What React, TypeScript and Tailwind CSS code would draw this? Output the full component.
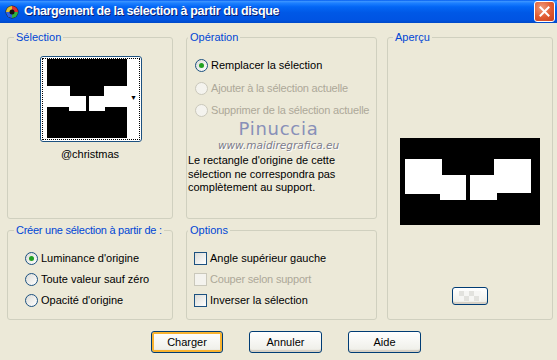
import React from 'react'

const font = { fontFamily: '"Liberation Sans", Arial, sans-serif' }

function Radio({ checked = false, disabled = false }: { checked?: boolean; disabled?: boolean }) {
  return (
    <span
      className={`flex h-[13px] w-[13px] shrink-0 items-center justify-center rounded-full border ${
        disabled
          ? 'border-[#cac8bb] bg-[#f4f3ee]'
          : 'border-[#1c5180] bg-[linear-gradient(135deg,#dcdcd7,#ffffff)]'
      }`}
    >
      {checked && <span className="h-[5px] w-[5px] rounded-full bg-[#21a121]" />}
    </span>
  )
}

function Check({ disabled = false }: { disabled?: boolean }) {
  return (
    <span
      className={`h-[13px] w-[13px] shrink-0 border ${
        disabled
          ? 'border-[#cac8bb] bg-[#f4f3ee]'
          : 'border-[#1c5180] bg-[linear-gradient(135deg,#dcdcd7,#ffffff)]'
      }`}
    />
  )
}

function Row({ control, label, disabled = false }: { control: React.ReactNode; label: string; disabled?: boolean }) {
  return (
    <div className="flex h-[13px] items-center gap-[3px] whitespace-nowrap">
      {control}
      <span className={disabled ? 'tracking-[-0.2px] text-[#aca899]' : 'text-black'}>{label}</span>
    </div>
  )
}

function Group({
  title,
  offset,
  className = '',
  children,
}: {
  title: string
  offset: string
  className?: string
  children: React.ReactNode
}) {
  return (
    <fieldset className={`min-w-0 rounded-[3px] border border-[#d0d0bf] ${className}`}>
      <legend className={`${offset} whitespace-nowrap px-[2px] leading-[13px] text-[#0046d5]`}>{title}</legend>
      {children}
    </fieldset>
  )
}

function XpButton({
  label,
  primary = false,
  className = '',
  children,
}: {
  label: string
  primary?: boolean
  className?: string
  children?: React.ReactNode
}) {
  return (
    <div
      className={`flex items-center justify-center rounded-[3px] border border-[#003c74] bg-[linear-gradient(180deg,#ffffff,#f0f0ea_85%,#d6d0c5)] text-black ${
        primary ? 'shadow-[inset_0_0_0_2px_#f8b330]' : 'shadow-[inset_0_-2px_0_#d6d0c5]'
      } ${className}`}
    >
      {label}
      {children}
    </div>
  )
}

function Shape({ w, h, scale }: { w: number; h: number; scale: 'thumb' | 'preview' }) {
  return scale === 'thumb' ? (
    <svg width={w} height={h} viewBox="0 0 80 79">
      <rect width="80" height="79" fill="#000" />
      <rect x="0" y="27" width="23" height="21" fill="#fff" />
      <rect x="22" y="37" width="17" height="15" fill="#fff" />
      <rect x="42" y="37" width="16" height="15" fill="#fff" />
      <rect x="57" y="27" width="23" height="21" fill="#fff" />
    </svg>
  ) : (
    <svg width={w} height={h} viewBox="0 0 140 87">
      <rect width="140" height="87" fill="#000" />
      <rect x="5" y="21" width="37" height="35" fill="#fff" />
      <rect x="40" y="37" width="26" height="25" fill="#fff" />
      <rect x="70" y="37" width="27" height="25" fill="#fff" />
      <rect x="94" y="21" width="37" height="34" fill="#fff" />
    </svg>
  )
}

export default function App() {
  return (
    <div className="h-[360px] w-[557px] overflow-hidden bg-[#ece9d8] text-[11px]" style={font}>
      {/* title bar */}
      <div className="flex h-[23px] items-center bg-[linear-gradient(180deg,#0058ee_0%,#3a93ff_6%,#1c7fff_14%,#0366f5_30%,#0058e6_55%,#0054e3_85%,#0049c8_100%)] pl-[5px] pr-[2px]">
        <svg width="14" height="14" viewBox="0 0 14 14" className="shrink-0">
          <circle cx="7" cy="7" r="6.5" fill="#222" />
          <path d="M7 7 L7 1 A6 6 0 0 1 13 7 Z" fill="#e03030" />
          <path d="M7 7 L13 7 A6 6 0 0 1 7 13 Z" fill="#30b040" />
          <path d="M7 7 L7 13 A6 6 0 0 1 1 7 Z" fill="#3060e0" />
          <path d="M7 7 L1 7 A6 6 0 0 1 7 1 Z" fill="#e0c030" />
          <circle cx="7" cy="7" r="2.5" fill="#111" />
        </svg>
        <span className="ml-[5px] flex-1 text-[12.5px] font-bold tracking-[-0.35px] text-white [text-shadow:1px_1px_0_#0a1e6e]">
          Chargement de la sélection à partir du disque
        </span>
        <div className="flex h-[21px] w-[21px] items-center justify-center rounded-[3px] border border-white bg-[radial-gradient(circle_at_35%_30%,#f09a7a,#e05a30_55%,#c8401e)]">
          <svg width="11" height="11" viewBox="0 0 11 11">
            <path d="M1.5 1.5 L9.5 9.5 M9.5 1.5 L1.5 9.5" stroke="#fff" strokeWidth="2" strokeLinecap="square" />
          </svg>
        </div>
      </div>

      {/* body */}
      <div className="grid grid-cols-[179px_201px_166px] grid-rows-[188px_96px] gap-y-[5px] pl-[7px] pt-[8px]">
        <Group title="Sélection" offset="ml-[6px]" className="flex w-[166px] flex-col items-center">
          <div className="mt-[12px] ml-[2px] flex h-[86px] w-[102px] rounded-[3px] border border-[#1c5180] bg-white p-[1px]">
            <div className="relative flex flex-1 border border-dotted border-black">
              <div className="ml-[4px]">
                <Shape w={80} h={79} scale="thumb" />
              </div>
              <span className="absolute right-[2px] top-[35px] text-[7px] leading-none text-black">▼</span>
            </div>
          </div>
          <div className="mt-[4px] text-black">@christmas</div>
        </Group>

        <Group title="Opération" offset="ml-[1px]" className="w-[191px]">
          <div className="px-[8px]">
            <div className="mt-[15px] flex flex-col gap-[9.5px]">
              <Row control={<Radio checked />} label="Remplacer la sélection" />
              <Row control={<Radio disabled />} label="Ajouter à la sélection actuelle" disabled />
              <Row control={<Radio disabled />} label="Supprimer de la sélection actuelle" disabled />
            </div>
            <div className="mt-[3px] flex flex-col items-center pr-[6px]">
              <div
                className="text-[18px] leading-[18px] tracking-[0.75px] text-[#8890b8]"
                style={{ fontFamily: '"DejaVu Sans", Verdana, sans-serif' }}
              >
                Pinuccia
              </div>
              <div
                className="mt-[2px] text-[10.5px] italic leading-[11px] text-[#7c7c8c] [text-shadow:1px_1px_0_#fff]"
                style={{ fontFamily: '"DejaVu Sans", Verdana, sans-serif' }}
              >
                www.maidiregrafica.eu
              </div>
            </div>
            <p className="-ml-[7px] mt-[3px] whitespace-nowrap leading-[13.5px] text-black">
              Le rectangle d'origine de cette
              <br />
              sélection ne correspondra pas
              <br />
              complètement au support.
            </p>
          </div>
        </Group>

        <Group title="Aperçu" offset="ml-[5px]" className="row-span-2 flex w-[166px] flex-col items-center">
          <div className="mt-[94px]">
            <Shape w={140} h={87} scale="preview" />
          </div>
          <XpButton label="" className="mt-[62px] h-[18px] w-[36px]">
            <svg width="22" height="10" viewBox="0 0 22 10">
              <rect width="22" height="10" fill="#f6f6f4" />
              <rect x="0" y="0" width="5" height="5" fill="#e2e2de" />
              <rect x="10" y="0" width="5" height="5" fill="#e2e2de" />
              <rect x="5" y="5" width="5" height="5" fill="#e2e2de" />
              <rect x="15" y="5" width="5" height="5" fill="#e2e2de" />
            </svg>
          </XpButton>
        </Group>

        <Group
          title="Créer une sélection à partir de :"
          offset="ml-[6px] tracking-[-0.25px]"
          className="w-[166px]"
        >
          <div className="mt-[15px] flex flex-col gap-[8px] px-[17px]">
            <Row control={<Radio checked />} label="Luminance d'origine" />
            <Row control={<Radio />} label="Toute valeur sauf zéro" />
            <Row control={<Radio />} label="Opacité d'origine" />
          </div>
        </Group>

        <Group title="Options" offset="ml-[1px]" className="w-[191px]">
          <div className="mt-[15px] flex flex-col gap-[8px] px-[7px]">
            <Row control={<Check />} label="Angle supérieur gauche" />
            <Row control={<Check disabled />} label="Couper selon support" disabled />
            <Row control={<Check />} label="Inverser la sélection" />
          </div>
        </Group>
      </div>

      {/* buttons */}
      <div className="ml-[151px] mt-[11px] flex gap-[26px]">
        <XpButton label="Charger" primary className="h-[22px] w-[72px]" />
        <XpButton label="Annuler" className="h-[22px] w-[73px]" />
        <XpButton label="Aide" className="h-[22px] w-[73px]" />
      </div>
    </div>
  )
}
